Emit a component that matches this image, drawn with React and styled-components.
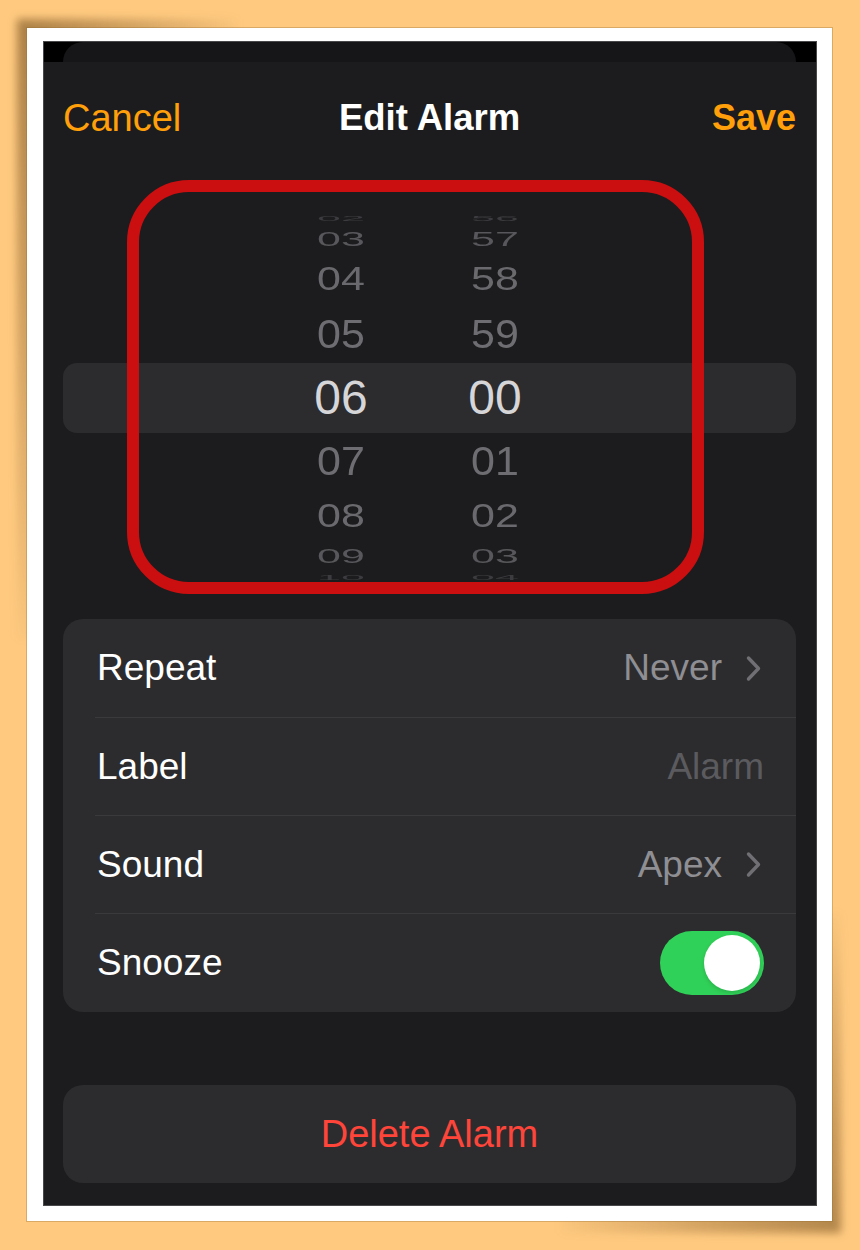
import React from "react";
import styled, { createGlobalStyle } from "styled-components";

const GlobalStyle = createGlobalStyle`
  html, body {
    margin: 0;
    padding: 0;
    background: #ffca80;
  }
  body {
    font-family: "Liberation Sans", Arial, sans-serif;
    -webkit-font-smoothing: antialiased;
  }
`;

const Page = styled.div`
  width: 860px;
  height: 1250px;
  box-sizing: border-box;
  padding: 28px 0 0 27px;
  isolation: isolate;
`;

// white photo frame with soft lifted-corner shadows
const Frame = styled.div`
  position: relative;
  width: 805px;
  box-sizing: border-box;
  padding: 14px 16px 16px 17px;
  background: #fff;
  box-shadow: 0 0 0 1px rgba(150, 110, 50, 0.35);

  &::before,
  &::after {
    content: "";
    position: absolute;
    z-index: -1;
    filter: blur(4px);
  }
  &::before {
    top: -9px;
    left: -10px;
    width: 220px;
    height: 620px;
    background: radial-gradient(
      ellipse at top left,
      rgba(100, 65, 20, 0.55) 0%,
      rgba(100, 65, 20, 0.3) 35%,
      rgba(100, 65, 20, 0) 75%
    );
  }
  &::after {
    bottom: -12px;
    right: -9px;
    width: 280px;
    height: 320px;
    background: radial-gradient(
      ellipse at bottom right,
      rgba(100, 65, 20, 0.5) 0%,
      rgba(100, 65, 20, 0.28) 35%,
      rgba(100, 65, 20, 0) 75%
    );
  }
`;

const Screen = styled.div`
  height: 1163px;
  background: #000;
  display: flex;
  flex-direction: column;
  box-shadow: 0 0 0 1px #48484a;
`;

// the previous sheet peeking out behind the modal
const BehindCard = styled.div`
  height: 20px;
  margin: 0 20px 0 19px;
  background: #161618;
  border-radius: 20px 20px 0 0;
`;

const Sheet = styled.div`
  flex: 1;
  background: #1c1c1e;
  padding: 0 20px 0 19px;
  display: flex;
  flex-direction: column;
`;

const Header = styled.div`
  display: grid;
  grid-template-columns: 1fr auto 1fr;
  align-items: center;
  height: 44px;
  margin-top: 34px;
`;

const NavButton = styled.div`
  color: #ff9f0a;
  font-size: ${(p) => (p.$bold ? "36px" : "38px")};
  font-weight: ${(p) => (p.$bold ? 700 : 400)};
  justify-self: ${(p) => (p.$end ? "end" : "start")};
  cursor: pointer;
`;

const Title = styled.div`
  color: #fff;
  font-size: 36.5px;
  font-weight: 700;
`;

const PickerArea = styled.div`
  position: relative;
  height: 368px;
  margin-top: 74px;
`;

const Wheel = styled.div`
  position: relative;
  height: 100%;
  overflow: hidden;
  display: flex;
  gap: 34px;
  padding-left: 218px;

  &::before {
    content: "";
    position: absolute;
    left: 0;
    right: 0;
    top: 50%;
    height: 70px;
    margin-top: -35px;
    background: #2c2c2f;
    border-radius: 14px;
  }
`;

const Column = styled.div`
  position: relative;
  z-index: 1;
  width: 120px;
  display: flex;
  flex-direction: column;
  justify-content: center;
`;

const WheelRow = styled.div`
  display: flex;
  align-items: center;
  justify-content: center;
  line-height: 1;
  white-space: nowrap;
`;

const Digit = styled.span`
  display: block;
  font-size: ${(p) => (p.$selected ? "48px" : "43px")};
  color: ${(p) => p.$tone};
`;

// red annotation drawn over the picker
const Highlight = styled.div`
  position: absolute;
  z-index: 2;
  top: -34px;
  left: 64px;
  width: 577px;
  height: 414px;
  box-sizing: border-box;
  border: 12px solid #cb0f10;
  border-radius: 62px;
  pointer-events: none;
`;

const Card = styled.div`
  margin-top: 37px;
  padding-bottom: 1px;
  background: #2c2c2e;
  border-radius: 20px;
  overflow: hidden;
`;

const Row = styled.div`
  height: 98px;
  box-sizing: border-box;
  margin-left: 32px;
  padding: 0 32px 0 2px;
  display: flex;
  align-items: center;
  justify-content: space-between;
  font-size: 37px;
  color: #fff;

  & + & {
    border-top: 1px solid #3a3a3c;
  }
`;

const Value = styled.div`
  display: flex;
  align-items: center;
  gap: 23px;
  color: ${(p) => (p.$placeholder ? "#5b5b5f" : "#8e8e93")};
  margin-right: ${(p) => (p.$chevron ? "2px" : "0")};
`;

const Toggle = styled.div`
  width: 104px;
  height: 64px;
  box-sizing: border-box;
  padding: 4px;
  border-radius: 32px;
  background: #30d158;
  display: flex;
  justify-content: flex-end;
`;

const Knob = styled.div`
  width: 56px;
  height: 56px;
  border-radius: 50%;
  background: #fff;
  box-shadow: 0 2px 4px rgba(0, 0, 0, 0.15);
`;

const DeleteButton = styled.div`
  margin-top: 73px;
  height: 98px;
  background: #2c2c2e;
  border-radius: 20px;
  display: flex;
  align-items: center;
  justify-content: center;
  color: #ff453a;
  font-size: 38px;
  cursor: pointer;
`;

const Chevron = () => (
  <svg width="17" height="27" viewBox="0 0 17 27">
    <path
      d="M3.5 3 L13.5 13.5 L3.5 24"
      fill="none"
      stroke="#707074"
      strokeWidth="3.4"
      strokeLinecap="round"
      strokeLinejoin="round"
    />
  </svg>
);

const R = 184;
const STEP = (20.4 * Math.PI) / 180;
const TONES = ["#d6d6d8", "#6e6e72", "#6a6a6e", "#58585c", "#3c3c40"];

const wheelRows = [-4, -3, -2, -1, 0, 1, 2, 3, 4].map((k) => {
  const a = Math.abs(k);
  const top = a === 0 ? -Math.sin(STEP / 2) : Math.sin((a - 0.5) * STEP);
  const bottom = Math.sin(Math.min(Math.PI / 2, (a + 0.5) * STEP));
  return { a, height: R * (bottom - top), scale: Math.cos(a * STEP) };
});

const hours = ["02", "03", "04", "05", "06", "07", "08", "09", "10"];
const minutes = ["56", "57", "58", "59", "00", "01", "02", "03", "04"];

const PickerColumn = ({ values }) => (
  <Column>
    {values.map((v, i) => {
      const row = wheelRows[i];
      return (
        <WheelRow key={i} style={{ height: row.height }}>
          <Digit
            $selected={row.a === 0}
            $tone={TONES[row.a]}
            style={{ transform: `scaleY(${row.scale})` }}
          >
            {v}
          </Digit>
        </WheelRow>
      );
    })}
  </Column>
);

const App = () => (
  <>
    <GlobalStyle />
    <Page>
      <Frame>
        <Screen>
          <BehindCard />
          <Sheet>
            <Header>
              <NavButton>Cancel</NavButton>
              <Title>Edit Alarm</Title>
              <NavButton $bold $end>
                Save
              </NavButton>
            </Header>

            <PickerArea>
              <Wheel>
                <PickerColumn values={hours} />
                <PickerColumn values={minutes} />
              </Wheel>
              <Highlight />
            </PickerArea>

            <Card>
              <Row>
                <span>Repeat</span>
                <Value $chevron>
                  Never
                  <Chevron />
                </Value>
              </Row>
              <Row>
                <span>Label</span>
                <Value $placeholder>Alarm</Value>
              </Row>
              <Row>
                <span>Sound</span>
                <Value $chevron>
                  Apex
                  <Chevron />
                </Value>
              </Row>
              <Row>
                <span>Snooze</span>
                <Toggle>
                  <Knob />
                </Toggle>
              </Row>
            </Card>

            <DeleteButton>Delete Alarm</DeleteButton>
          </Sheet>
        </Screen>
      </Frame>
    </Page>
  </>
);

export default App;
